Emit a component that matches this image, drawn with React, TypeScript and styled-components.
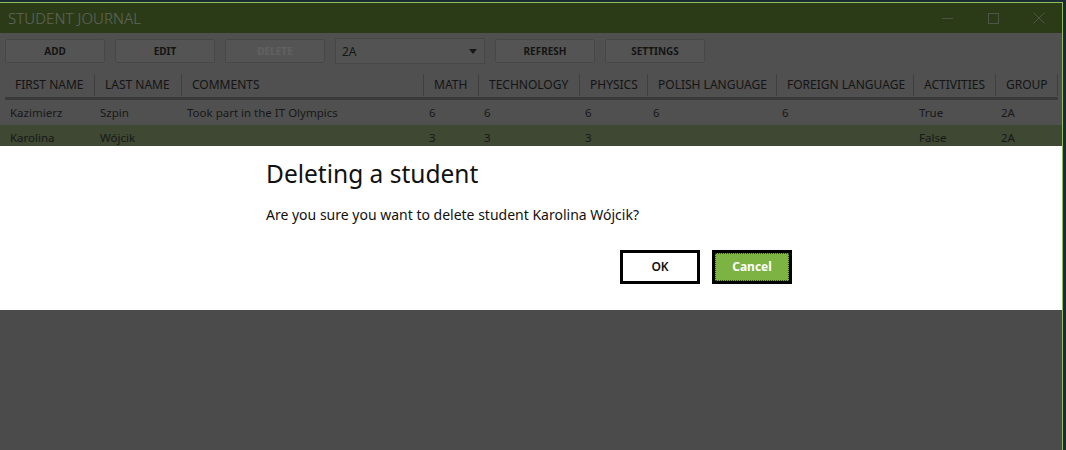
import React from "react";
import styled, { createGlobalStyle } from "styled-components";

const FONT = `"Noto Sans", "Open Sans", Arial, sans-serif`;

const GlobalStyle = createGlobalStyle`
  html, body {
    margin: 0;
    padding: 0;
    background: #1c2a33;
    overflow: hidden;
    font-family: ${FONT};
  }
`;

const Desktop = styled.div`
  height: 450px;
  padding-top: 2px;
  box-sizing: border-box;
`;

const Window = styled.div`
  position: relative;
  width: 1063px;
  height: 448px;
  box-sizing: border-box;
  border-top: 1px solid #8fbf5a;
  border-right: 1px solid #8fbf5a;
  background: #bcbcbc;
  display: flex;
  flex-direction: column;
`;

const TitleBar = styled.div`
  height: 30px;
  flex-shrink: 0;
  background: #6c943a;
  display: flex;
  align-items: center;
  justify-content: space-between;
`;

const Title = styled.span`
  padding-left: 8px;
  font-size: 15px;
  font-weight: 300;
  color: #eef8e0;
  letter-spacing: 0.1px;
`;

const Controls = styled.div`
  display: flex;
  height: 100%;
`;

const ControlButton = styled.div`
  width: 46px;
  height: 100%;
  display: flex;
  align-items: center;
  justify-content: center;
  color: #c4d4b2;
`;

const Toolbar = styled.div`
  display: flex;
  align-items: center;
  gap: 10px;
  padding: 5px 5px 8px 5px;
  background: #c8c8c8;
`;

const ToolButton = styled.button<{ $disabled?: boolean }>`
  width: 100px;
  height: 24px;
  box-sizing: border-box;
  border: 1px solid #b2b2b2;
  border-radius: 2px;
  background: #d2d2d2;
  font-family: ${FONT};
  font-size: 10px;
  font-weight: 700;
  color: ${({ $disabled }) => ($disabled ? "#f2f2f2" : "#333333")};
  padding: 0;
`;

const Combo = styled.div`
  width: 150px;
  height: 26px;
  box-sizing: border-box;
  border: 1px solid #b2b2b2;
  background: #d0d0d0;
  display: flex;
  align-items: center;
  justify-content: space-between;
  padding: 0 7px 0 6px;
  font-size: 12px;
  color: #3a3a3a;
`;

const Arrow = styled.span`
  width: 0;
  height: 0;
  border-left: 4px solid transparent;
  border-right: 4px solid transparent;
  border-top: 5px solid #3a3a3a;
`;

const COLS = "90px 87px 242px 55px 101px 68px 129px 137px 82px 62px";

const Grid = styled.div`
  background: #c8c8c8;
`;

const HeaderRow = styled.div`
  display: grid;
  grid-template-columns: ${COLS};
  align-items: center;
  height: 25px;
  margin-left: 5px;
  width: 1053px;
  border-bottom: 3px solid #919191;
`;

const HeaderCell = styled.div`
  height: 22px;
  display: flex;
  align-items: center;
  padding-left: 10px;
  border-right: 1px solid #9e9e9e;
  font-size: 12px;
  color: #353535;
  white-space: nowrap;
  overflow: hidden;
`;

const Row = styled.div<{ $selected?: boolean }>`
  display: grid;
  grid-template-columns: ${COLS};
  align-items: center;
  height: 25px;
  padding-left: 5px;
  background: ${({ $selected }) => ($selected ? "#9bb480" : "#c8c8c8")};
`;

const Cell = styled.div`
  padding-left: 5px;
  font-size: 11.5px;
  color: #3e3e3e;
  white-space: nowrap;
`;

const Scrim = styled.div`
  position: absolute;
  inset: 0;
  background: rgba(0, 0, 0, 0.6);
  display: flex;
  flex-direction: column;
  justify-content: center;
`;

const DialogBand = styled.div`
  background: #ffffff;
  height: 164px;
  margin-top: 2px;
  display: flex;
  justify-content: center;
`;

const DialogContent = styled.div`
  width: 526px;
  margin-left: -4px;
  display: flex;
  flex-direction: column;
  padding-top: 11px;
  box-sizing: border-box;
`;

const DialogTitle = styled.div`
  font-size: 24.5px;
  line-height: 34px;
  color: #111;
`;

const DialogMessage = styled.div`
  margin-top: 14px;
  font-size: 14px;
  line-height: 20px;
  color: #111;
`;

const DialogButtons = styled.div`
  display: flex;
  justify-content: flex-end;
  gap: 12px;
  margin-top: 25px;
`;

const DialogButton = styled.button<{ $accent?: boolean }>`
  width: 80px;
  height: 34px;
  box-sizing: border-box;
  border: 3px solid #000;
  background: ${({ $accent }) => ($accent ? "#7cb342" : "#fff")};
  color: ${({ $accent }) => ($accent ? "#fff" : "#111")};
  font-family: ${FONT};
  font-size: 12px;
  font-weight: ${({ $accent }) => ($accent ? 700 : 600)};
  padding: 0;
  outline: ${({ $accent }) => ($accent ? "1px dotted #2e4a12" : "none")};
  outline-offset: -4px;
`;

const columns = [
  "FIRST NAME",
  "LAST NAME",
  "COMMENTS",
  "MATH",
  "TECHNOLOGY",
  "PHYSICS",
  "POLISH LANGUAGE",
  "FOREIGN LANGUAGE",
  "ACTIVITIES",
  "GROUP",
];

const students = [
  ["Kazimierz", "Szpin", "Took part in the IT Olympics", "6", "6", "6", "6", "6", "True", "2A"],
  ["Karolina", "Wójcik", "", "3", "3", "3", "", "", "False", "2A"],
];

export default function App() {
  return (
    <>
      <GlobalStyle />
      <Desktop>
        <Window>
          <TitleBar>
            <Title>STUDENT JOURNAL</Title>
            <Controls>
              <ControlButton>
                <svg width="11" height="11" viewBox="0 0 11 11">
                  <line x1="0" y1="5.5" x2="11" y2="5.5" stroke="currentColor" strokeWidth="1" />
                </svg>
              </ControlButton>
              <ControlButton>
                <svg width="11" height="11" viewBox="0 0 11 11">
                  <rect x="0.5" y="0.5" width="10" height="10" fill="none" stroke="currentColor" strokeWidth="1" />
                </svg>
              </ControlButton>
              <ControlButton>
                <svg width="12" height="12" viewBox="0 0 12 12">
                  <path d="M0.5 0.5 L11.5 11.5 M11.5 0.5 L0.5 11.5" stroke="currentColor" strokeWidth="1" />
                </svg>
              </ControlButton>
            </Controls>
          </TitleBar>

          <Toolbar>
            <ToolButton>ADD</ToolButton>
            <ToolButton>EDIT</ToolButton>
            <ToolButton $disabled>DELETE</ToolButton>
            <Combo>
              2A
              <Arrow />
            </Combo>
            <ToolButton>REFRESH</ToolButton>
            <ToolButton>SETTINGS</ToolButton>
          </Toolbar>

          <Grid>
            <HeaderRow>
              {columns.map((c) => (
                <HeaderCell key={c}>{c}</HeaderCell>
              ))}
            </HeaderRow>
            {students.map((s, i) => (
              <Row key={i} $selected={i === 1}>
                {s.map((v, j) => (
                  <Cell key={j}>{v}</Cell>
                ))}
              </Row>
            ))}
          </Grid>

          <Scrim>
            <DialogBand>
              <DialogContent>
                <DialogTitle>Deleting a student</DialogTitle>
                <DialogMessage>Are you sure you want to delete student Karolina Wójcik?</DialogMessage>
                <DialogButtons>
                  <DialogButton>OK</DialogButton>
                  <DialogButton $accent>Cancel</DialogButton>
                </DialogButtons>
              </DialogContent>
            </DialogBand>
          </Scrim>
        </Window>
      </Desktop>
    </>
  );
}
